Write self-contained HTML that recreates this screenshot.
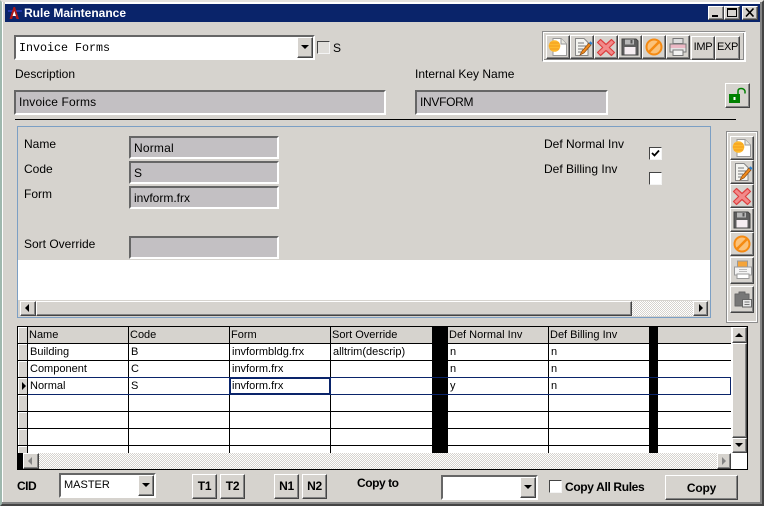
<!DOCTYPE html>
<html><head><meta charset="utf-8"><style>
html,body{margin:0;padding:0;background:#d6d3ce}
#w{position:relative;width:764px;height:506px;overflow:hidden;background:#d6d3ce;font-family:"Liberation Sans",sans-serif;font-size:12px;color:#000}
#w div,#w svg{position:absolute;box-sizing:border-box}
.t{white-space:nowrap;line-height:14px}
.f{background:#c3c0c3;border:2px solid;border-color:#666 #fff #fff #666;padding:3px 0 0 3px;line-height:15px;white-space:nowrap}
.b{background:#d6d3ce;border:1px solid;border-color:#fff #444 #444 #fff;box-shadow:inset -1px -1px 0 #848484}
.c{background:#fff;border:2px solid;border-color:#666 #fff #fff #666}
.k{background:#fff;border:1px solid;border-color:#444 #f4f4f4 #f4f4f4 #444}
.h{height:1px;background:#000}
.v{width:1px;background:#000;top:327px;height:126px}
.g{line-height:16px;white-space:nowrap;font-size:11px}
.bd{font-weight:bold;text-align:center;white-space:nowrap}
.d{background-color:#fff;background-image:conic-gradient(#d6d3ce 25%,#fff 0 50%,#d6d3ce 0 75%,#fff 0);background-size:2px 2px}
.hdr{background:#d6d3ce;top:327px;height:16px}
.ind{left:18px;width:9px;height:16px;background:#d6d3ce;border-top:1px solid #fff;border-left:1px solid #fff}
</style></head><body><div id="w">
<svg width="0" height="0" style="left:0;top:0">
<defs>
<symbol id="new" viewBox="0 0 20 20"><path d="M5 1.5H13L18.500 7V18.500H5Z" fill="#fff" stroke="#999"/><path d="M13 1.500V7H18.500" fill="#e8e8e0" stroke="#999"/><circle cx="6.500" cy="9" r="5.800" fill="#fdb92e"/><path d="M1 9H12M2 6H11M2 12H11" stroke="#f39a1c"/></symbol>
<symbol id="edit" viewBox="0 0 20 20"><path d="M2.500 1.500H11L15 5.500V18.500H2.500Z" fill="#f4f4f0" stroke="#888"/><path d="M5 6H11M5 9H13M5 12H10M5 15H8" stroke="#777"/><path d="M7 18L9 14L16 6L18 8L11 16Z" fill="#f08a1c" stroke="#8a4a10" stroke-width=".7"/><path d="M16 6L17.500 4.200L19.500 6.200L18 8Z" fill="#2a7fd0"/></symbol>
<symbol id="x" viewBox="0 0 20 20"><path d="M4.500 2.500L10 7.500L15.500 2.500L18.500 5.500L13.300 10.500L18.500 15.500L15.500 18.500L10 13.500L4.500 18.500L1.500 15.500L6.700 10.500L1.500 5.500Z" fill="#f28a8a" stroke="#de4040" stroke-width="1.200" stroke-linejoin="round"/></symbol>
<symbol id="save" viewBox="0 0 20 20"><path d="M2 2H16L18 4V18H2Z" fill="#5e5e5e" stroke="#444"/><rect x="5" y="2.500" width="9" height="5" fill="#b8b8b8"/><rect x="10.500" y="3" width="2" height="3.500" fill="#555"/><rect x="4.500" y="10" width="11" height="7.500" fill="#f6eef2"/></symbol>
<symbol id="no" viewBox="0 0 20 20"><circle cx="10" cy="10" r="7.500" fill="#fbc27a" stroke="#f58a12" stroke-width="2"/><path d="M5 15L15 5" stroke="#f58a12" stroke-width="2.500"/></symbol>
<symbol id="print" viewBox="0 0 20 20"><rect x="5" y="1.500" width="10" height="5" fill="#ddd" stroke="#777"/><path d="M2 7H18V15H2Z" fill="#ebb8c4" stroke="#777"/><rect x="2.500" y="11" width="15" height="3.500" fill="#e4e4e4"/><rect x="5" y="13" width="10" height="5.500" fill="#f2f2f2" stroke="#777"/></symbol>
<symbol id="print2" viewBox="0 0 20 20"><rect x="4.500" y="1" width="10" height="6" fill="#f4a43a" stroke="#999"/><path d="M1.500 7H18.500V15H1.500Z" fill="#f4f4f4" stroke="#999"/><path d="M6 9.500H14M6 11.500H14" stroke="#bbb"/><rect x="4" y="14" width="12" height="4.500" fill="#fff" stroke="#999"/></symbol>
<symbol id="paste" viewBox="0 0 20 20"><path d="M2 5H6V3H12V5H16V17H2Z" fill="#777" stroke="#666" stroke-linejoin="round"/><rect x="9.500" y="10.500" width="9" height="7.500" fill="#e8e8e8" stroke="#666"/><path d="M11.500 13H16.500M11.500 15.500H16.500" stroke="#777"/></symbol>
</defs></svg>

<!-- window frame -->
<div style="left:0;top:0;width:764px;height:506px;border:2px solid;border-color:#e4e2de #444 #444 #9fb8ae"></div>
<div style="left:2px;top:2px;width:760px;height:2px;background:#fff"></div>
<div style="left:2px;top:2px;width:3px;height:501px;background:#d6d3ce;border-left:1px solid #fff"></div>
<div style="left:760px;top:2px;width:2px;height:501px;background:#848484"></div>
<div style="left:2px;top:502px;width:760px;height:2px;background:#848484"></div>

<!-- title -->
<div style="left:5px;top:4px;width:755px;height:18px;background:#0a246a"></div>
<svg style="left:7px;top:5px" width="16" height="16" viewBox="0 0 16 16"><path d="M1 6H15" stroke="#2236a8" stroke-width="2"/><path d="M2.500 14L6.500 2H8L12 14H9.500L7.200 9L5 14Z" fill="#b01818"/><path d="M6.500 8L7.300 6L8 8L9 11H5.500Z" fill="#fff"/></svg>
<div class="t" style="left:24px;top:6px;color:#fff;font-weight:bold;font-size:12px">Rule Maintenance</div>
<div class="b" style="left:708px;top:6px;width:16px;height:14px"></div><div style="left:712px;top:15px;width:6px;height:2px;background:#000"></div>
<div class="b" style="left:724px;top:6px;width:16px;height:14px"></div><div style="left:727px;top:8px;width:10px;height:9px;border:1px solid #000;border-top-width:2px"></div>
<div class="b" style="left:742px;top:6px;width:16px;height:14px"></div>
<svg style="left:745px;top:8px" width="10" height="9" viewBox="0 0 10 9"><path d="M1 0.500L8.500 8.500M8.500 0.500L1 8.500" stroke="#000" stroke-width="1.600"/></svg>

<!-- combo -->
<div class="c" style="left:14px;top:35px;width:301px;height:25px"></div>
<div class="t" style="left:19px;top:41px;font:11.670px/14px 'Liberation Mono',monospace">Invoice Forms</div>
<div class="b" style="left:297px;top:37px;width:16px;height:21px"></div>
<svg style="left:301px;top:45px" width="9" height="5"><path d="M0 0H8L4 4Z" fill="#000"/></svg>
<div class="k" style="left:317px;top:41px;width:13px;height:13px;background:#e0deda"></div>
<div class="t" style="left:333px;top:41px;font-size:12px">S</div>

<div class="t" style="left:15px;top:67px">Description</div>
<div class="t" style="left:415px;top:67px">Internal Key Name</div>
<div class="f" style="left:14px;top:90px;width:372px;height:25px;letter-spacing:.15px">Invoice Forms</div>
<div class="f" style="left:415px;top:90px;width:193px;height:25px;letter-spacing:-.3px">INVFORM</div>
<div class="h" style="left:15px;top:119px;width:721px"></div>

<!-- top toolbar -->
<div style="left:542px;top:31px;width:204px;height:31px;border:1px solid #8c8c8c;border-right-color:#fff;border-bottom-color:#fff;box-shadow:inset 0 0 0 1px #fff,inset -2px -2px 0 0 #8c8c8c"></div>
<div class="b" style="left:546px;top:35px;width:24px;height:24px"></div><svg style="left:548px;top:37px" width="20" height="20"><use href="#new"/></svg>
<div class="b" style="left:570px;top:35px;width:24px;height:24px"></div><svg style="left:573px;top:37px" width="20" height="20"><use href="#edit"/></svg>
<div class="b" style="left:594px;top:35px;width:24px;height:24px"></div><svg style="left:596px;top:37px" width="20" height="20"><use href="#x"/></svg>
<div class="b" style="left:618px;top:35px;width:24px;height:24px"></div><svg style="left:620px;top:37px" width="20" height="20"><use href="#save"/></svg>
<div class="b" style="left:642px;top:35px;width:24px;height:24px"></div><svg style="left:644px;top:37px" width="20" height="20"><use href="#no"/></svg>
<div class="b" style="left:666px;top:35px;width:24px;height:24px"></div><svg style="left:668px;top:37px" width="20" height="20"><use href="#print"/></svg>
<div class="b" style="left:691px;top:36px;width:24px;height:24px;text-align:center;line-height:21px;font-size:11px;letter-spacing:-.3px">IMP</div>
<div class="b" style="left:715px;top:36px;width:25px;height:24px;text-align:center;line-height:21px;font-size:11px;letter-spacing:-.3px">EXP</div>

<!-- lock -->
<div class="b" style="left:725px;top:83px;width:25px;height:25px"></div>
<svg style="left:728px;top:87px" width="20" height="18" viewBox="0 0 20 18"><rect x="1" y="7" width="11" height="9" fill="#008000"/><rect x="5.500" y="10" width="2" height="3" fill="#fff"/><path d="M10 7V4Q10 1.500 13 1.500T17 4V6.500" fill="none" stroke="#008000" stroke-width="1.500"/></svg>

<!-- panel -->
<div style="left:17px;top:126px;width:694px;height:192px;border:1px solid #7c9fc4"></div>
<div class="t" style="left:24px;top:137px">Name</div>
<div class="t" style="left:24px;top:162px">Code</div>
<div class="t" style="left:24px;top:187px">Form</div>
<div class="t" style="left:24px;top:237px">Sort Override</div>
<div class="f" style="left:129px;top:136px;width:150px;height:23px;letter-spacing:.2px">Normal</div>
<div class="f" style="left:129px;top:161px;width:150px;height:23px">S</div>
<div class="f" style="left:129px;top:186px;width:150px;height:23px">invform.frx</div>
<div class="f" style="left:129px;top:236px;width:150px;height:23px"></div>
<div class="t" style="left:544px;top:137px">Def Normal Inv</div>
<div class="t" style="left:544px;top:162px">Def Billing Inv</div>
<div class="k" style="left:649px;top:147px;width:13px;height:13px"></div>
<svg style="left:651px;top:149px" width="9" height="9"><path d="M1 4L3.500 6.500L8 1.500" fill="none" stroke="#000" stroke-width="1.800"/></svg>
<div class="k" style="left:649px;top:172px;width:13px;height:13px"></div>
<div style="left:18px;top:260px;width:692px;height:40px;background:#fff"></div>
<div style="left:18px;top:300px;width:692px;height:17px;background:#d6d3ce"></div>
<div class="b" style="left:20px;top:301px;width:16px;height:15px"></div>
<svg style="left:25px;top:304px" width="5" height="9"><path d="M4 0V8L0 4Z" fill="#000"/></svg>
<div class="b" style="left:36px;top:301px;width:596px;height:15px"></div>
<div class="d" style="left:632px;top:301px;width:61px;height:15px"></div>
<div class="b" style="left:693px;top:301px;width:15px;height:15px"></div>
<svg style="left:699px;top:304px" width="5" height="9"><path d="M0 0V8L4 4Z" fill="#000"/></svg>

<!-- side toolbar -->
<div style="left:726px;top:131px;width:32px;height:192px;border:1px solid #8c8c8c;box-shadow:inset 0 0 0 1px #fff"></div>
<div class="b" style="left:730px;top:136px;width:24px;height:24px"></div><svg style="left:732px;top:138px" width="20" height="20"><use href="#new"/></svg>
<div class="b" style="left:730px;top:160px;width:24px;height:24px"></div><svg style="left:733px;top:162px" width="20" height="20"><use href="#edit"/></svg>
<div class="b" style="left:730px;top:184px;width:24px;height:24px"></div><svg style="left:732px;top:186px" width="20" height="20"><use href="#x"/></svg>
<div class="b" style="left:730px;top:208px;width:24px;height:24px"></div><svg style="left:732px;top:210px" width="20" height="20"><use href="#save"/></svg>
<div class="b" style="left:730px;top:232px;width:24px;height:24px"></div><svg style="left:732px;top:234px" width="20" height="20"><use href="#no"/></svg>
<div class="b" style="left:730px;top:257px;width:24px;height:27px"></div><svg style="left:733px;top:260px" width="20" height="20"><use href="#print2"/></svg>
<div class="b" style="left:730px;top:286px;width:24px;height:27px"></div><svg style="left:733px;top:289px" width="20" height="20"><use href="#paste"/></svg>

<!-- grid -->
<div style="left:17px;top:326px;width:731px;height:144px;background:#fff;border:1px solid #000"></div>
<div class="hdr" style="left:28px;width:703px"></div>
<div class="ind" style="top:327px"></div><div class="ind" style="top:344px"></div><div class="ind" style="top:361px"></div><div class="ind" style="top:378px"></div><div class="ind" style="top:395px"></div><div class="ind" style="top:412px"></div><div class="ind" style="top:429px"></div><div class="ind" style="top:446px;height:7px"></div>
<div class="h" style="left:18px;top:343px;width:713px"></div>
<div class="h" style="left:18px;top:360px;width:713px"></div>
<div class="h" style="left:18px;top:377px;width:713px"></div>
<div class="h" style="left:18px;top:394px;width:713px"></div>
<div class="h" style="left:18px;top:411px;width:713px"></div>
<div class="h" style="left:18px;top:428px;width:713px"></div>
<div class="h" style="left:18px;top:445px;width:713px"></div>
<div class="v" style="left:27px"></div><div class="v" style="left:128px"></div><div class="v" style="left:229px"></div><div class="v" style="left:330px"></div><div class="v" style="left:548px"></div>
<div style="left:432px;top:327px;width:16px;height:126px;background:#000"></div>
<div style="left:649px;top:327px;width:9px;height:126px;background:#000"></div>
<!-- current row -->
<div style="left:28px;top:377px;width:703px;height:18px;border:1px solid #0a246a;border-left:0"></div>
<div style="left:229px;top:377px;width:102px;height:18px;border:2px solid #0a246a"></div>
<svg style="left:22px;top:382px" width="5" height="9"><path d="M0 0V8L4 4Z" fill="#000"/></svg>

<div class="g" style="left:29px;top:327px">Name</div><div class="g" style="left:130px;top:327px">Code</div><div class="g" style="left:231px;top:327px">Form</div><div class="g" style="left:332px;top:327px">Sort Override</div><div class="g" style="left:449px;top:327px">Def Normal Inv</div><div class="g" style="left:550px;top:327px">Def Billing Inv</div>
<div class="g" style="left:30px;top:344px">Building</div><div class="g" style="left:131px;top:344px">B</div><div class="g" style="left:232px;top:344px">invformbldg.frx</div><div class="g" style="left:333px;top:344px">alltrim(descrip)</div><div class="g" style="left:450px;top:344px">n</div><div class="g" style="left:551px;top:344px">n</div>
<div class="g" style="left:30px;top:361px">Component</div><div class="g" style="left:131px;top:361px">C</div><div class="g" style="left:232px;top:361px">invform.frx</div><div class="g" style="left:450px;top:361px">n</div><div class="g" style="left:551px;top:361px">n</div>
<div class="g" style="left:30px;top:378px">Normal</div><div class="g" style="left:131px;top:378px">S</div><div class="g" style="left:232px;top:378px">invform.frx</div><div class="g" style="left:450px;top:378px">y</div><div class="g" style="left:551px;top:378px">n</div>

<!-- grid scrollbars -->
<div style="left:18px;top:453px;width:5px;height:16px;background:#000"></div>
<div class="b" style="left:23px;top:453px;width:16px;height:16px"></div>
<svg style="left:28px;top:457px" width="5" height="9"><path d="M4 0V8L0 4Z" fill="#848484"/></svg>
<div class="d" style="left:39px;top:453px;width:678px;height:16px"></div>
<div class="b" style="left:717px;top:453px;width:14px;height:16px"></div>
<svg style="left:722px;top:457px" width="5" height="9"><path d="M0 0V8L4 4Z" fill="#848484"/></svg>
<div class="b" style="left:732px;top:327px;width:15px;height:16px"></div>
<svg style="left:735px;top:333px" width="9" height="5"><path d="M4 0L8 4H0Z" fill="#000"/></svg>
<div class="b" style="left:732px;top:343px;width:15px;height:95px"></div>
<div class="b" style="left:732px;top:438px;width:15px;height:15px"></div>
<svg style="left:735px;top:443px" width="9" height="5"><path d="M0 0H8L4 4Z" fill="#000"/></svg>

<!-- bottom -->
<div class="t" style="left:17px;top:479px;font-weight:bold;letter-spacing:-.5px">CID</div>
<div class="c" style="left:59px;top:473px;width:97px;height:25px;padding:3px 0 0 3px;line-height:15px;font-size:11px">MASTER</div>
<div class="b" style="left:138px;top:475px;width:16px;height:21px"></div>
<svg style="left:142px;top:483px" width="9" height="5"><path d="M0 0H8L4 4Z" fill="#000"/></svg>
<div class="b bd" style="left:192px;top:474px;width:25px;height:25px;line-height:22px;letter-spacing:-.3px">T1</div>
<div class="b bd" style="left:220px;top:474px;width:25px;height:25px;line-height:22px;letter-spacing:-.3px">T2</div>
<div class="b bd" style="left:274px;top:474px;width:25px;height:25px;line-height:22px;letter-spacing:-.3px">N1</div>
<div class="b bd" style="left:302px;top:474px;width:25px;height:25px;line-height:22px;letter-spacing:-.3px">N2</div>
<div class="t" style="left:357px;top:476px;font-weight:bold;letter-spacing:-.45px">Copy to</div>
<div class="c" style="left:441px;top:475px;width:97px;height:25px"></div>
<div class="b" style="left:520px;top:477px;width:16px;height:21px"></div>
<svg style="left:524px;top:485px" width="9" height="5"><path d="M0 0H8L4 4Z" fill="#000"/></svg>
<div class="k" style="left:549px;top:480px;width:13px;height:13px"></div>
<div class="t" style="left:565px;top:480px;font-weight:bold;letter-spacing:-.35px">Copy All Rules</div>
<div class="b bd" style="left:665px;top:475px;width:73px;height:25px;line-height:24px;letter-spacing:-.2px">Copy</div>
</div></body></html>
